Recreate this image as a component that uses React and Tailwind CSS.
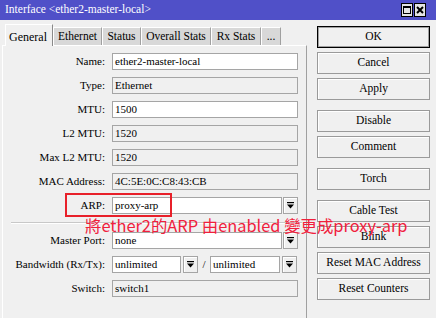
import React from 'react';

const tabs = [
  { name: 'General', w: 'w-[48px]', active: true },
  { name: 'Ethernet', w: 'w-[49px]' },
  { name: 'Status', w: 'w-[39px]' },
  { name: 'Overall Stats', w: 'w-[70px]' },
  { name: 'Rx Stats', w: 'w-[50px]' },
  { name: '...', w: 'w-[20px]' },
];

const buttons = [
  { label: 'OK', mt: 'mt-0', def: true },
  { label: 'Cancel', mt: 'mt-[4px]' },
  { label: 'Apply', mt: 'mt-[4px]' },
  { label: 'Disable', mt: 'mt-[10px]' },
  { label: 'Comment', mt: 'mt-[4px]' },
  { label: 'Torch', mt: 'mt-[10px]' },
  { label: 'Cable Test', mt: 'mt-[10px]' },
  { label: 'Blink', mt: 'mt-[4px]' },
  { label: 'Reset MAC Address', mt: 'mt-[4px]' },
  { label: 'Reset Counters', mt: 'mt-[4px]' },
];

function DownArrow() {
  return (
    <div className="w-[15px] h-[17px] shrink-0 border border-[#a5a5a5] bg-[#f0f0f0] shadow-[inset_1px_1px_0_#fff] flex items-center justify-center">
      <svg width="7" height="7" viewBox="0 0 7 7">
        <rect x="0" y="0" width="7" height="1.2" fill="#000" />
        <path d="M0 2.5 H7 L3.5 6.5 Z" fill="#000" />
      </svg>
    </div>
  );
}

function Field({ value, ro, w = 'w-[186px]' }) {
  return (
    <div
      className={`${w} h-[17px] shrink-0 border border-[#a5a5a5] ${ro ? 'bg-[#f0f0f0]' : 'bg-white'} pl-[2px] leading-[15px] whitespace-nowrap overflow-hidden`}
    >
      {value}
    </div>
  );
}

function Row({ label, children, mt = 'mt-[7px]' }) {
  return (
    <div className={`flex items-center h-[17px] ${mt}`}>
      <div className="w-[103px] text-right shrink-0 pr-[1px]">{label}</div>
      <div className="ml-[6px] flex items-center">{children}</div>
    </div>
  );
}

export default function App() {
  return (
    <div className="w-[436px] h-[318px] overflow-hidden bg-[#f0f0f0] font-['Liberation_Serif',serif] text-[11px] text-black relative">
      {/* Title bar */}
      <div className="h-[20px] bg-[#5050c8] flex items-center justify-between pl-[5px] pr-[10px]">
        <span className="text-white text-[11.5px]">Interface &lt;ether2-master-local&gt;</span>
        <div className="flex gap-[1px]">
          <div className="w-[12px] h-[14px] bg-[#e4e4e4] border border-black flex items-center justify-center">
            <div className="w-[8px] h-[8px] border border-black border-t-2" />
          </div>
          <div className="w-[12px] h-[14px] bg-[#e4e4e4] border border-black flex items-center justify-center">
            <svg width="8" height="8" viewBox="0 0 8 8">
              <path d="M1 1 L7 7 M7 1 L1 7" stroke="#000" strokeWidth="2" />
            </svg>
          </div>
        </div>
      </div>

      <div className="flex pt-[3px]">
        {/* Left: tabs + panel */}
        <div className="ml-[2px] w-[305px]">
          <div className="flex items-end pl-[3px] h-[22px]">
            {tabs.map((t) =>
              t.active ? (
                <div
                  key={t.name}
                  className={`${t.w} h-[22px] -mb-px relative z-10 bg-[#f0f0f0] border-t border-l border-white border-r border-r-[#8a8a8a] pl-[3px] pt-[3px] text-[12px]`}
                >
                  {t.name}
                </div>
              ) : (
                <div
                  key={t.name}
                  className={`${t.w} h-[18px] bg-[#d8d8d8] border-t border-l border-white border-r border-r-[#a0a0a0] text-center leading-[17px] text-[11.5px] whitespace-nowrap`}
                >
                  {t.name}
                </div>
              )
            )}
          </div>
          <div className="h-[280px] border-t border-l border-white border-r border-r-[#a0a0a0] pt-[7px]">
            <Row label="Name:" mt="mt-0">
              <Field value="ether2-master-local" />
            </Row>
            <Row label="Type:">
              <Field value="Ethernet" ro />
            </Row>
            <Row label="MTU:">
              <Field value="1500" />
            </Row>
            <Row label="L2 MTU:">
              <Field value="1520" ro />
            </Row>
            <Row label="Max L2 MTU:">
              <Field value="1520" ro />
            </Row>
            <Row label="MAC Address:">
              <Field value="4C:5E:0C:C8:43:CB" ro />
            </Row>
            <Row label="ARP:">
              <Field value="proxy-arp" w="w-[170px]" />
              <div className="ml-[1px]">
                <DownArrow />
              </div>
            </Row>
            <div className="ml-[8px] mr-[4px] mt-[8px] h-[2px] border-t border-[#c8c8c8] border-b border-b-white" />
            <Row label="Master Port:" mt="mt-[8px]">
              <Field value="none" w="w-[170px]" />
              <div className="ml-[1px]">
                <DownArrow />
              </div>
            </Row>
            <Row label="Bandwidth (Rx/Tx):">
              <Field value="unlimited" w="w-[69px]" />
              <div className="ml-[2px]">
                <DownArrow />
              </div>
              <span className="w-[12px] text-center">/</span>
              <Field value="unlimited" w="w-[70px]" />
              <div className="ml-[2px]">
                <DownArrow />
              </div>
            </Row>
            <Row label="Switch:">
              <Field value="switch1" ro />
            </Row>
          </div>
        </div>

        {/* Right: buttons */}
        <div className="ml-[10px] w-[113px] pt-[3px] flex flex-col">
          {buttons.map((b) => (
            <div
              key={b.label}
              className={`${b.mt} h-[22px] flex items-center justify-center text-[11.5px] bg-[#f0f0f0] ${
                b.def ? 'border border-black shadow-[inset_0_0_0_1px_#a0a0a0]' : 'border border-[#9a9a9a] shadow-[inset_1px_1px_0_#fff]'
              }`}
            >
              {b.label}
            </div>
          ))}
        </div>
      </div>

      {/* Annotation overlay */}
      <div className="absolute left-[65px] top-[193px] w-[107px] h-[24px] border-2 border-[#e8202a]" />
      <div className="absolute left-[85px] top-[215px] text-[16.4px] leading-[20px] text-[#f0203c] font-['Noto_Sans_CJK_TC',sans-serif] whitespace-nowrap">
        將ether2的ARP 由enabled 變更成proxy-arp
      </div>
    </div>
  );
}
